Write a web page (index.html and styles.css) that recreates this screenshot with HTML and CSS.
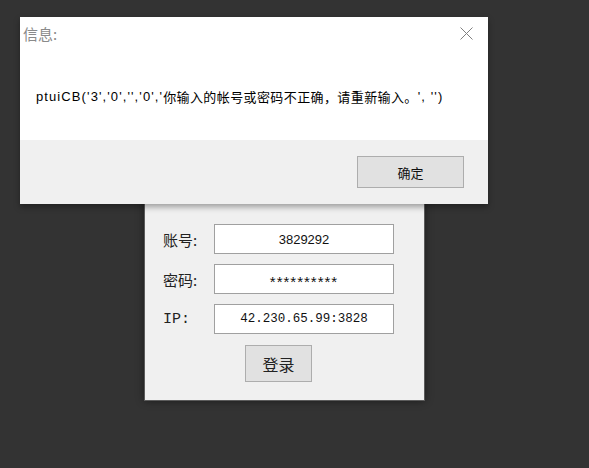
FILE: index.html
```html
<!DOCTYPE html>
<html>
<head>
<meta charset="utf-8">
<link rel="stylesheet" href="styles.css">
</head>
<body>

<div class="login-win">
  <div class="form">
    <div class="row">
      <span class="label">账号:</span>
      <div class="field">3829292</div>
    </div>
    <div class="row">
      <span class="label">密码:</span>
      <div class="field stars">**********</div>
    </div>
    <div class="row">
      <span class="label mono">IP:</span>
      <div class="field mono">42.230.65.99:3828</div>
    </div>
    <div class="actions">
      <button class="login-btn">登录</button>
    </div>
  </div>
</div>

<div class="dialog">
  <div class="dlg-head">
    <span class="dlg-title">信息:</span>
    <svg class="dlg-close" width="13" height="13" viewBox="0 0 13 13">
      <path d="M0.5 0.5 L12.5 12.5 M12.5 0.5 L0.5 12.5" stroke="#808080" stroke-width="1" fill="none"/>
    </svg>
  </div>
  <div class="dlg-body"><span class="asc">ptuiCB('3','0','','0','</span><span class="cjk">你输入的帐号或密码不正确，请重新输入。</span><span class="asc">', '')</span></div>
  <div class="dlg-foot">
    <button class="ok-btn">确定</button>
  </div>
</div>

</body>
</html>
```

FILE: styles.css
```css
html, body {
  margin: 0;
  padding: 0;
}
body {
  width: 589px;
  height: 468px;
  background: #333333;
  position: relative;
  overflow: hidden;
  font-family: "Liberation Sans", "Noto Sans CJK SC", sans-serif;
}

/* login window, sits behind the message box */
.login-win {
  position: absolute;
  left: 144px;
  top: 150px;
  width: 279px;
  height: 249px;
  background: #f0f0f0;
  border: 1px solid #5c5c5c;
  box-shadow: 0 0 8px rgba(0, 0, 0, 0.45);
}
.form {
  display: flex;
  flex-direction: column;
  gap: 10px;
  padding: 73px 0 0 18px;
}
.row {
  display: flex;
  align-items: center;
  height: 30px;
}
.label {
  width: 51px;
  font-family: "Noto Sans CJK SC", sans-serif;
  font-size: 15px;
  color: #222;
}
.label.mono {
  font-family: "Liberation Mono", monospace;
  font-size: 15px;
  color: #222;
}
.field {
  box-sizing: border-box;
  width: 180px;
  height: 30px;
  background: #fff;
  border: 1px solid #a0a0a0;
  display: flex;
  align-items: center;
  justify-content: center;
  font-size: 13px;
  color: #111;
}
.field.stars {
  font-size: 15px;
  letter-spacing: 1px;
  padding-top: 4px;
}
.field.mono {
  font-family: "Liberation Mono", monospace;
  font-size: 12.5px;
}
.actions {
  display: flex;
  padding-left: 82px;
  padding-top: 1px;
}
.login-btn {
  width: 67px;
  height: 37px;
  background: #e1e1e1;
  border: 1px solid #adadad;
  font-family: "Noto Sans CJK SC", sans-serif;
  font-size: 16px;
  color: #222;
  padding: 0;
}

/* message box */
.dialog {
  position: absolute;
  left: 20px;
  top: 17px;
  width: 468px;
  height: 187px;
  background: #fff;
  box-shadow: 0 3px 6px rgba(0, 0, 0, 0.35);
  display: flex;
  flex-direction: column;
}
.dlg-head {
  height: 33px;
  display: flex;
  align-items: center;
  justify-content: space-between;
  padding: 0 15px 0 3px;
}
.dlg-title {
  font-family: "Noto Sans CJK SC", sans-serif;
  font-size: 15px;
  color: #8a8a8a;
}
.dlg-close {
  display: block;
}
.dlg-body {
  flex: 1;
  display: flex;
  align-items: center;
  padding: 2px 0 0 16px;
  font-size: 13px;
  color: #000;
  white-space: pre;
}
.dlg-body .asc {
  font-family: "Liberation Sans", sans-serif;
  letter-spacing: 1.1px;
}
.dlg-body .cjk {
  font-family: "Noto Sans CJK SC", sans-serif;
  letter-spacing: 0.4px;
}
.dlg-foot {
  height: 64px;
  background: #f0f0f0;
  display: flex;
  justify-content: flex-end;
  align-items: center;
  padding-right: 24px;
}
.ok-btn {
  width: 107px;
  height: 32px;
  background: #e1e1e1;
  border: 1px solid #adadad;
  font-family: "Noto Sans CJK SC", sans-serif;
  font-size: 13px;
  color: #111;
  padding: 0;
}
```
